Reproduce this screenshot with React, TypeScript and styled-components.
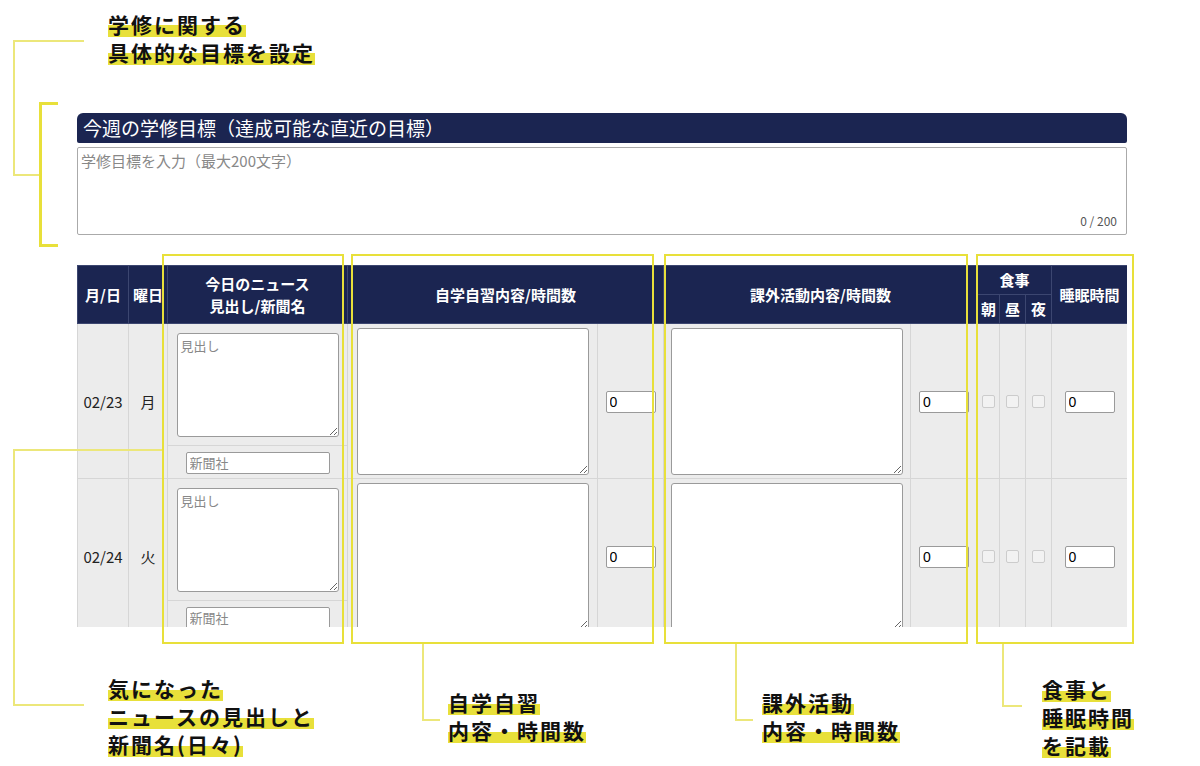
import styled, { createGlobalStyle } from 'styled-components'

const GlobalStyle = createGlobalStyle`
  body {
    margin: 0;
    background: #fff;
    font-family: "Noto Sans CJK JP", "Noto Sans", sans-serif;
  }
`

const NAVY = '#1b2551'
const YELLOW = '#e8e03a'

const Page = styled.div`
  position: relative;
  width: 1200px;
  height: 766px;
  overflow: hidden;
  box-sizing: border-box;
  padding: 113px 73px 0 77px;
`

const GoalHeader = styled.div`
  height: 30px;
  background: ${NAVY};
  color: #fff;
  font-size: 19px;
  line-height: 30px;
  padding-left: 6px;
  border-radius: 6px 6px 2px 2px;
`

const GoalBox = styled.div`
  position: relative;
  margin-top: 4px;
  height: 88px;
  border: 1px solid #aaa;
  border-radius: 2px;
  box-sizing: border-box;
  padding: 2px 3px;
  color: #888;
  font-size: 15px;
`

const Counter = styled.span`
  position: absolute;
  right: 9px;
  bottom: 5px;
  font-size: 12px;
  color: #555;
`

const TableClip = styled.div`
  margin-top: 30px;
  height: 362px;
  overflow: hidden;
`

const Table = styled.table`
  width: 1050px;
  table-layout: fixed;
  border-collapse: collapse;
`

const Th = styled.th<{ $small?: boolean }>`
  background: ${NAVY};
  color: #fff;
  font-size: 15px;
  font-weight: 700;
  line-height: 1.45;
  padding: 0;
  border: 1px solid #3c4670;
  height: ${p => (p.$small ? '28px' : 'auto')};
`

const Td = styled.td<{ $h?: number }>`
  background: #ececec;
  border: 1px solid #d6d6d6;
  text-align: center;
  font-size: 15px;
  color: #222;
  padding: 0;
  height: ${p => (p.$h ? `${p.$h}px` : 'auto')};
`

const Area = styled.textarea<{ $w: number; $h: number }>`
  display: block;
  margin: 0 auto;
  width: ${p => p.$w}px;
  height: ${p => p.$h}px;
  box-sizing: border-box;
  border: 1px solid #9a9a9a;
  border-radius: 3px;
  background: #fff;
  font-family: inherit;
  font-size: 13px;
  padding: 2px 3px;
  resize: vertical;
  &::placeholder { color: #888; }
`

const TextInput = styled.input<{ $w: number }>`
  width: ${p => p.$w}px;
  height: 22px;
  box-sizing: border-box;
  border: 1px solid #9a9a9a;
  border-radius: 2px;
  background: #fff;
  font-family: "Liberation Sans", Arial, sans-serif;
  font-size: 14px;
  padding: 0 3px;
  &::placeholder { color: #888; font-family: "Noto Sans CJK JP", sans-serif; font-size: 13px; }
`

const Check = styled.span`
  display: inline-block;
  width: 11px;
  height: 11px;
  border: 1px solid #ccc;
  border-radius: 2px;
  background: #f2f2f2;
`

const Overlay = styled.div`
  position: absolute;
  inset: 0;
  pointer-events: none;
`

const Frame = styled.div`
  position: absolute;
  border: 2.5px solid ${YELLOW};
  box-sizing: border-box;
`

const Line = styled.div`
  position: absolute;
  background: #ece77a;
`

const Note = styled.div`
  position: absolute;
  font-size: 21px;
  font-weight: 700;
  line-height: 28px;
  letter-spacing: 2px;
  color: #111;
`

const Mark = styled.span`
  background: linear-gradient(transparent 55%, ${YELLOW} 55%, ${YELLOW} 92%, transparent 92%);
`

const NoteText = ({ lines }: { lines: string[] }) => (
  <>
    {lines.map(l => (
      <div key={l}>
        <Mark>{l}</Mark>
      </div>
    ))}
  </>
)

const days = [
  { date: '02/23', day: '月' },
  { date: '02/24', day: '火' },
]

const App = () => (
  <Page>
    <GlobalStyle />
    <GoalHeader>今週の学修目標（達成可能な直近の目標）</GoalHeader>
    <GoalBox>
      学修目標を入力（最大200文字）
      <Counter>0 / 200</Counter>
    </GoalBox>
    <TableClip>
      <Table>
        <colgroup>
          {[51, 39, 180, 250, 66, 247, 67, 22, 26, 26, 76].map((w, i) => (
            <col key={i} style={{ width: w }} />
          ))}
        </colgroup>
        <thead>
          <tr>
            <Th rowSpan={2}>月/日</Th>
            <Th rowSpan={2}>曜日</Th>
            <Th rowSpan={2}>今日のニュース<br />見出し/新聞名</Th>
            <Th rowSpan={2} colSpan={2}>自学自習内容/時間数</Th>
            <Th rowSpan={2} colSpan={2}>課外活動内容/時間数</Th>
            <Th colSpan={3} $small>食事</Th>
            <Th rowSpan={2}>睡眠時間</Th>
          </tr>
          <tr>
            <Th $small>朝</Th>
            <Th $small>昼</Th>
            <Th $small>夜</Th>
          </tr>
        </thead>
        <tbody>
          {days.map(d => [
            <tr key={d.date + 'a'}>
              <Td rowSpan={2}>{d.date}</Td>
              <Td rowSpan={2}>{d.day}</Td>
              <Td $h={121}>
                <Area $w={162} $h={104} placeholder="見出し" />
              </Td>
              <Td rowSpan={2}>
                <Area $w={232} $h={147} />
              </Td>
              <Td rowSpan={2}>
                <TextInput $w={50} defaultValue="0" />
              </Td>
              <Td rowSpan={2}>
                <Area $w={232} $h={147} />
              </Td>
              <Td rowSpan={2}>
                <TextInput $w={50} defaultValue="0" />
              </Td>
              {[0, 1, 2].map(i => (
                <Td rowSpan={2} key={i}>
                  <Check />
                </Td>
              ))}
              <Td rowSpan={2}>
                <TextInput $w={50} defaultValue="0" />
              </Td>
            </tr>,
            <tr key={d.date + 'b'}>
              <Td $h={32}>
                <TextInput $w={144} placeholder="新聞社" />
              </Td>
            </tr>,
          ])}
        </tbody>
      </Table>
    </TableClip>

    <Overlay>
      <Note style={{ left: 108, top: 10 }}>
        <NoteText lines={['学修に関する', '具体的な目標を設定']} />
      </Note>
      <Line style={{ left: 13, top: 40, width: 71, height: 1.5 }} />
      <Line style={{ left: 13, top: 40, width: 1.5, height: 134 }} />
      <Line style={{ left: 13, top: 174, width: 26, height: 1.5 }} />
      <Line style={{ left: 39, top: 102, width: 2.5, height: 144, background: YELLOW }} />
      <Line style={{ left: 39, top: 102, width: 19, height: 2.5, background: YELLOW }} />
      <Line style={{ left: 39, top: 244, width: 19, height: 2.5, background: YELLOW }} />

      <Frame style={{ left: 162, top: 254, width: 182, height: 390 }} />
      <Frame style={{ left: 351, top: 254, width: 303, height: 390 }} />
      <Frame style={{ left: 664, top: 254, width: 304, height: 390 }} />
      <Frame style={{ left: 976, top: 254, width: 158, height: 390 }} />

      <Line style={{ left: 13, top: 449, width: 149, height: 1.5 }} />
      <Line style={{ left: 13, top: 449, width: 1.5, height: 256 }} />
      <Line style={{ left: 13, top: 704, width: 71, height: 1.5 }} />
      <Note style={{ left: 108, top: 674 }}>
        <NoteText lines={['気になった', 'ニュースの見出しと', '新聞名(日々)']} />
      </Note>

      <Line style={{ left: 422, top: 644, width: 1.5, height: 76 }} />
      <Line style={{ left: 422, top: 719, width: 18, height: 1.5 }} />
      <Note style={{ left: 448, top: 688 }}>
        <NoteText lines={['自学自習', '内容・時間数']} />
      </Note>

      <Line style={{ left: 735, top: 644, width: 1.5, height: 76 }} />
      <Line style={{ left: 735, top: 719, width: 18, height: 1.5 }} />
      <Note style={{ left: 762, top: 688 }}>
        <NoteText lines={['課外活動', '内容・時間数']} />
      </Note>

      <Line style={{ left: 1002, top: 644, width: 1.5, height: 62 }} />
      <Line style={{ left: 1002, top: 705, width: 20, height: 1.5 }} />
      <Note style={{ left: 1042, top: 675 }}>
        <NoteText lines={['食事と', '睡眠時間', 'を記載']} />
      </Note>
    </Overlay>
  </Page>
)

export default App
